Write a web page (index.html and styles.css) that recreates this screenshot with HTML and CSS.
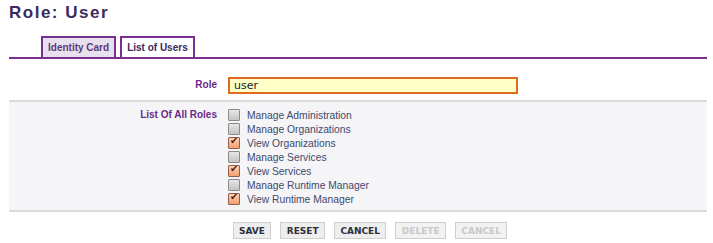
FILE: index.html
```html
<!DOCTYPE html>
<html lang="en">
<head>
  <meta charset="UTF-8" />
  <title>Role: User</title>
  <link rel="stylesheet" href="styles.css">
</head>
<body>
  <div class="page">
    <h1>Role: User</h1>
    <div class="tabs">
      <span class="tab active">Identity Card</span>
      <span class="tab">List of Users</span>
    </div>

    <!-- Role name -->
    <div class="row role-row">
      <label class="lbl" for="roleName">Role</label>
      <div class="field"><input type="text" id="roleName" value="user" /></div>
    </div>

    <!-- Permissions -->
    <div class="row perms">
      <span class="lbl">List Of All Roles</span>
      <ul class="checks">
        <li><span class="box"></span>Manage Administration</li>
        <li><span class="box"></span>Manage Organizations</li>
        <li><span class="box on"></span>View Organizations</li>
        <li><span class="box"></span>Manage Services</li>
        <li><span class="box on"></span>View Services</li>
        <li><span class="box"></span>Manage Runtime Manager</li>
        <li><span class="box on"></span>View Runtime Manager</li>
      </ul>
    </div>

    <div class="actions">
      <button>SAVE</button>
      <button>RESET</button>
      <button>CANCEL</button>
      <button disabled>DELETE</button>
      <button disabled>CANCEL</button>
    </div>
  </div>
</body>
</html>
```

FILE: styles.css
```css
body { margin: 0; background: #fff; font-family: "Liberation Sans", Arial, sans-serif; }
.page { padding: 3px 6px 0 9px; }
h1 { margin: 0; font-size: 17px; line-height: 20px; letter-spacing: 1.5px; color: #3b2a5e; }
/* tabs */
.tabs { display: flex; gap: 4px; margin-top: 13px; padding-left: 32px; border-bottom: 2px solid #7a2e8e; }
.tab { height: 19px; line-height: 19px; padding: 0 5px; border: 2px solid #7a2e8e; border-bottom: none; font-size: 10px; font-weight: bold; color: #3b2a5e; background: #fff; }
.tab.active { background: #e8e0ee; color: #5a3a78; }
/* form rows */
.row { display: grid; grid-template-columns: 208px 1fr; column-gap: 11px; }
.lbl { text-align: right; font-size: 10px; font-weight: bold; color: #6b2a8a; }
.role-row { padding: 16px 0 6px; align-items: center; }
.field input { width: 290px; height: 17px; box-sizing: border-box; padding: 0 4px; border: 2px solid #e06a20; background: #ffffc8; font-family: "DejaVu Sans", sans-serif; font-size: 11px; color: #222; outline: none; }
.perms { background: #f5f4f7; border-top: 2px solid #dcdcdc; border-bottom: 2px solid #dcdcdc; padding: 6px 0 4px; }
.perms .lbl { line-height: 14px; }
.checks { list-style: none; margin: 0; padding: 0; }
.checks li { display: flex; align-items: center; height: 14px; font-size: 10.3px; color: #3c4a6e; }
.box { width: 10px; height: 10px; margin-right: 7px; border: 1px solid #8a8a8a; background: linear-gradient(#e6e6e6, #c4c4c4); border-radius: 1px; position: relative; }
.box.on { background: linear-gradient(#ffd2b0, #f4a070); border-color: #8a6050; }
.box.on::after { content: "\2714"; position: absolute; left: 1px; top: -3px; font-size: 10px; color: #5a1e10; }
/* buttons */
.actions { display: flex; justify-content: center; gap: 9px; padding: 10px 0 8px; margin-left: 24px; }
.actions button { height: 17px; padding: 0 5.4px; border: 1px solid #cfcfcf; background: #eeeeee; font-family: "DejaVu Sans", sans-serif; font-size: 9px; font-weight: bold; color: #2e2e3a; }
.actions button:disabled { color: #c8c8cc; background: #f2f2f2; }
```
